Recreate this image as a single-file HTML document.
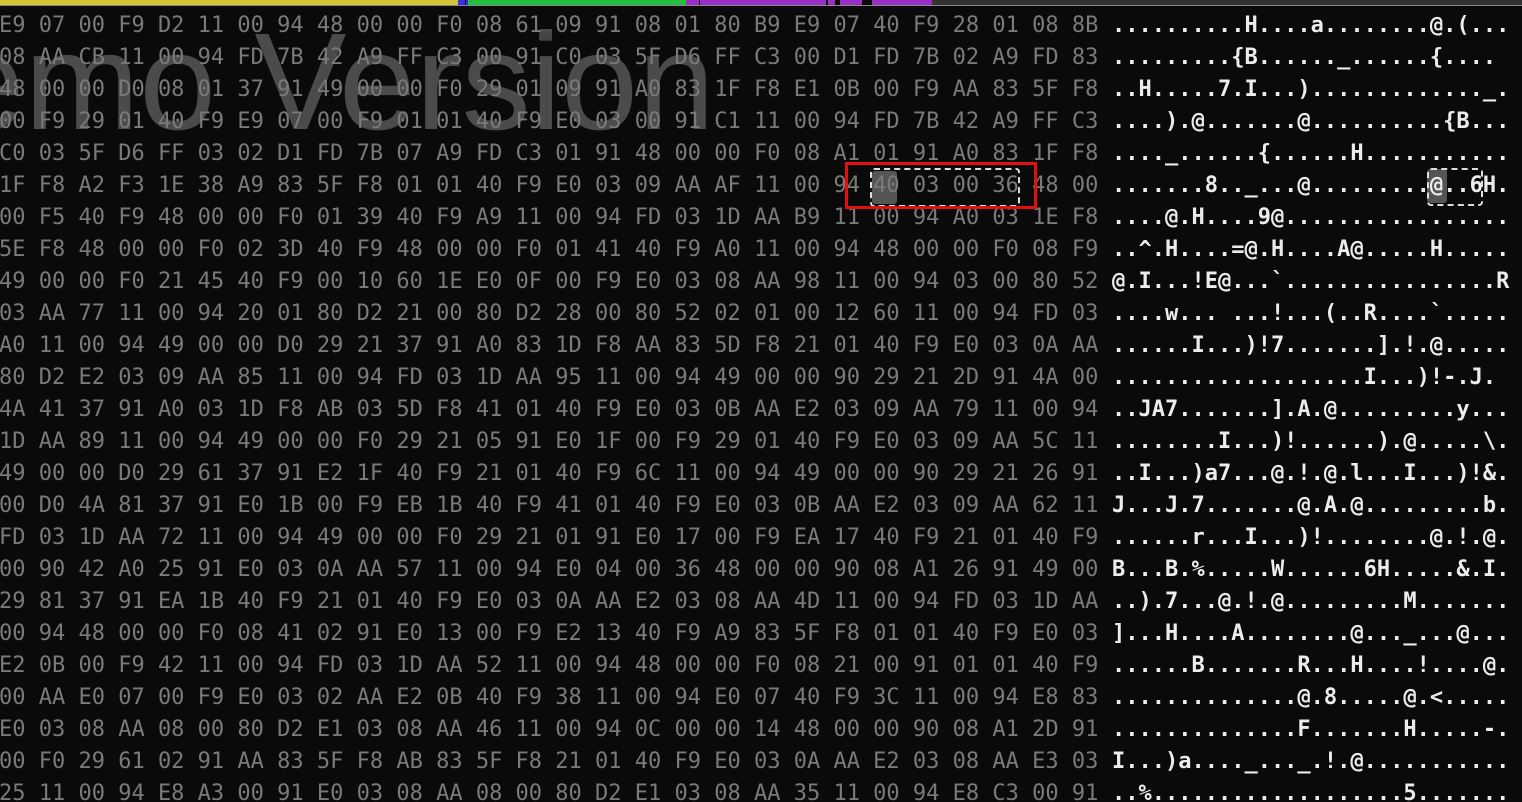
<!DOCTYPE html>
<html><head><meta charset="utf-8"><style>
html,body{margin:0;padding:0;background:#0a0a0a;width:1522px;height:802px;overflow:hidden;position:relative}
.bar{position:absolute;top:0;height:5px}
.wm{position:absolute;left:-152px;top:13px;font:138px/1 "Liberation Sans",sans-serif;color:rgba(140,140,140,0.5);white-space:pre}
.r{position:absolute;height:32px;line-height:32px;font-family:"DejaVu Sans Mono","Liberation Mono",monospace;font-size:22px;white-space:pre}
.h{left:-1px;color:#7a7a7a}
.a{left:1112px;color:#ececec;font-weight:bold}
</style></head><body>
<div class="bar" style="left:0;width:458px;background:#d4c534"></div>
<div class="bar" style="left:458px;width:10px;background:#3a2ee0"></div>
<div class="bar" style="left:465px;width:1px;background:#111"></div>
<div class="bar" style="left:468px;width:218px;background:#22c03c"></div>
<div class="bar" style="left:686px;width:13px;background:#9a2ec4"></div>
<div class="bar" style="left:700px;width:126px;background:#9a2ec4"></div>
<div class="bar" style="left:828px;width:7px;background:#9a2ec4"></div>
<div class="bar" style="left:840px;width:22px;background:#9a2ec4"></div>
<div class="bar" style="left:872px;width:60px;background:#9a2ec4"></div>
<div class="bar" style="left:932px;width:590px;background:#333"></div>
<div style="position:absolute;left:0;top:5px;width:1522px;height:1px;background:#888"></div>
<div class="wm">Demo Version</div>
<div style="position:absolute;left:539px;top:33px;width:13px;height:7px;background:#444"></div>
<div style="position:absolute;left:872px;top:171px;width:25px;height:33px;background:#555;border-radius:3px"></div>
<div style="position:absolute;left:1427px;top:169px;width:20px;height:34px;background:#555;border-radius:3px"></div>
<div class="r h" style="top:10px">E9 07 00 F9 D2 11 00 94 48 00 00 F0 08 61 09 91 08 01 80 B9 E9 07 40 F9 28 01 08 8B</div>
<div class="r a" style="top:10px">..........H....a........@.(...</div>
<div class="r h" style="top:42px">08 AA CB 11 00 94 FD 7B 42 A9 FF C3 00 91 C0 03 5F D6 FF C3 00 D1 FD 7B 02 A9 FD 83</div>
<div class="r a" style="top:42px">.........{B......_......{....</div>
<div class="r h" style="top:74px">48 00 00 D0 08 01 37 91 49 00 00 F0 29 01 09 91 A0 83 1F F8 E1 0B 00 F9 AA 83 5F F8</div>
<div class="r a" style="top:74px">..H.....7.I...)............._.</div>
<div class="r h" style="top:106px">00 F9 29 01 40 F9 E9 07 00 F9 01 01 40 F9 E0 03 00 91 C1 11 00 94 FD 7B 42 A9 FF C3</div>
<div class="r a" style="top:106px">....).@.......@..........{B...</div>
<div class="r h" style="top:138px">C0 03 5F D6 FF 03 02 D1 FD 7B 07 A9 FD C3 01 91 48 00 00 F0 08 A1 01 91 A0 83 1F F8</div>
<div class="r a" style="top:138px">...._......{......H...........</div>
<div class="r h" style="top:170px">1F F8 A2 F3 1E 38 A9 83 5F F8 01 01 40 F9 E0 03 09 AA AF 11 00 94 40 03 00 36 48 00</div>
<div class="r a" style="top:170px">.......8.._...@.........@..6H.</div>
<div class="r h" style="top:202px">00 F5 40 F9 48 00 00 F0 01 39 40 F9 A9 11 00 94 FD 03 1D AA B9 11 00 94 A0 03 1E F8</div>
<div class="r a" style="top:202px">....@.H....9@.................</div>
<div class="r h" style="top:234px">5E F8 48 00 00 F0 02 3D 40 F9 48 00 00 F0 01 41 40 F9 A0 11 00 94 48 00 00 F0 08 F9</div>
<div class="r a" style="top:234px">..^.H....=@.H....A@.....H.....</div>
<div class="r h" style="top:266px">49 00 00 F0 21 45 40 F9 00 10 60 1E E0 0F 00 F9 E0 03 08 AA 98 11 00 94 03 00 80 52</div>
<div class="r a" style="top:266px">@.I...!E@...`................R</div>
<div class="r h" style="top:298px">03 AA 77 11 00 94 20 01 80 D2 21 00 80 D2 28 00 80 52 02 01 00 12 60 11 00 94 FD 03</div>
<div class="r a" style="top:298px">....w... ...!...(..R....`.....</div>
<div class="r h" style="top:330px">A0 11 00 94 49 00 00 D0 29 21 37 91 A0 83 1D F8 AA 83 5D F8 21 01 40 F9 E0 03 0A AA</div>
<div class="r a" style="top:330px">......I...)!7.......].!.@.....</div>
<div class="r h" style="top:362px">80 D2 E2 03 09 AA 85 11 00 94 FD 03 1D AA 95 11 00 94 49 00 00 90 29 21 2D 91 4A 00</div>
<div class="r a" style="top:362px">...................I...)!-.J.</div>
<div class="r h" style="top:394px">4A 41 37 91 A0 03 1D F8 AB 03 5D F8 41 01 40 F9 E0 03 0B AA E2 03 09 AA 79 11 00 94</div>
<div class="r a" style="top:394px">..JA7.......].A.@.........y...</div>
<div class="r h" style="top:426px">1D AA 89 11 00 94 49 00 00 F0 29 21 05 91 E0 1F 00 F9 29 01 40 F9 E0 03 09 AA 5C 11</div>
<div class="r a" style="top:426px">........I...)!......).@.....\.</div>
<div class="r h" style="top:458px">49 00 00 D0 29 61 37 91 E2 1F 40 F9 21 01 40 F9 6C 11 00 94 49 00 00 90 29 21 26 91</div>
<div class="r a" style="top:458px">..I...)a7...@.!.@.l...I...)!&amp;.</div>
<div class="r h" style="top:490px">00 D0 4A 81 37 91 E0 1B 00 F9 EB 1B 40 F9 41 01 40 F9 E0 03 0B AA E2 03 09 AA 62 11</div>
<div class="r a" style="top:490px">J...J.7.......@.A.@.........b.</div>
<div class="r h" style="top:522px">FD 03 1D AA 72 11 00 94 49 00 00 F0 29 21 01 91 E0 17 00 F9 EA 17 40 F9 21 01 40 F9</div>
<div class="r a" style="top:522px">......r...I...)!........@.!.@.</div>
<div class="r h" style="top:554px">00 90 42 A0 25 91 E0 03 0A AA 57 11 00 94 E0 04 00 36 48 00 00 90 08 A1 26 91 49 00</div>
<div class="r a" style="top:554px">B...B.%.....W......6H.....&amp;.I.</div>
<div class="r h" style="top:586px">29 81 37 91 EA 1B 40 F9 21 01 40 F9 E0 03 0A AA E2 03 08 AA 4D 11 00 94 FD 03 1D AA</div>
<div class="r a" style="top:586px">..).7...@.!.@.........M.......</div>
<div class="r h" style="top:618px">00 94 48 00 00 F0 08 41 02 91 E0 13 00 F9 E2 13 40 F9 A9 83 5F F8 01 01 40 F9 E0 03</div>
<div class="r a" style="top:618px">]...H....A........@..._...@...</div>
<div class="r h" style="top:650px">E2 0B 00 F9 42 11 00 94 FD 03 1D AA 52 11 00 94 48 00 00 F0 08 21 00 91 01 01 40 F9</div>
<div class="r a" style="top:650px">......B.......R...H....!....@.</div>
<div class="r h" style="top:682px">00 AA E0 07 00 F9 E0 03 02 AA E2 0B 40 F9 38 11 00 94 E0 07 40 F9 3C 11 00 94 E8 83</div>
<div class="r a" style="top:682px">..............@.8.....@.&lt;.....</div>
<div class="r h" style="top:714px">E0 03 08 AA 08 00 80 D2 E1 03 08 AA 46 11 00 94 0C 00 00 14 48 00 00 90 08 A1 2D 91</div>
<div class="r a" style="top:714px">..............F.......H.....-.</div>
<div class="r h" style="top:746px">00 F0 29 61 02 91 AA 83 5F F8 AB 83 5F F8 21 01 40 F9 E0 03 0A AA E2 03 08 AA E3 03</div>
<div class="r a" style="top:746px">I...)a...._..._.!.@...........</div>
<div class="r h" style="top:778px">25 11 00 94 E8 A3 00 91 E0 03 08 AA 08 00 80 D2 E1 03 08 AA 35 11 00 94 E8 C3 00 91</div>
<div class="r a" style="top:778px">..%...................5.......</div>
<div style="position:absolute;left:870px;top:168px;width:146px;height:35px;border:2px dashed #ddd;border-radius:4px"></div>
<div style="position:absolute;left:1427px;top:168px;width:52px;height:34px;border:2px dashed #ddd;border-radius:4px"></div>
<div style="position:absolute;left:845px;top:162px;width:186px;height:41px;border:3px solid #e01010"></div>
</body></html>
